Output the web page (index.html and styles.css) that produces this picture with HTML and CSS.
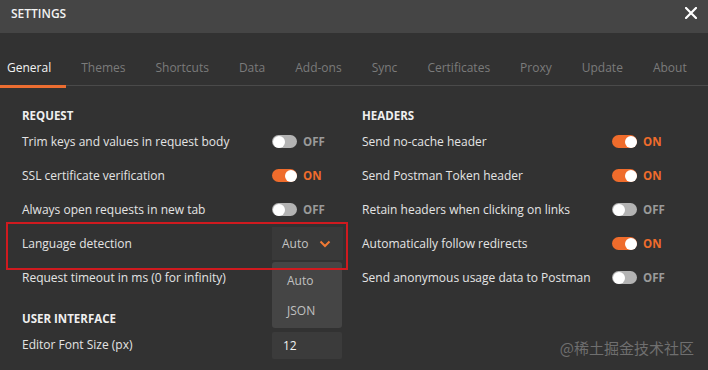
FILE: index.html
```html
<!DOCTYPE html>
<html>
<head>
<meta charset="utf-8">
<link rel="stylesheet" href="styles.css">
</head>
<body>
<div class="titlebar">
  <span class="title">SETTINGS</span>
  <svg class="close" width="12" height="12" viewBox="0 0 12 12"><path d="M1 1 L11 11 M11 1 L1 11" stroke="#fff" stroke-width="2.2" stroke-linecap="square"/></svg>
</div>
<div class="tabs">
  <div class="tab active">General</div>
  <div class="tab">Themes</div>
  <div class="tab">Shortcuts</div>
  <div class="tab">Data</div>
  <div class="tab">Add-ons</div>
  <div class="tab">Sync</div>
  <div class="tab">Certificates</div>
  <div class="tab">Proxy</div>
  <div class="tab">Update</div>
  <div class="tab">About</div>
</div>
<div class="content">
  <div class="col">
    <div class="heading">REQUEST</div>
    <div class="row"><span class="label">Trim keys and values in request body</span><span class="toggle off"><span class="knob"></span></span><span class="state off">OFF</span></div>
    <div class="row"><span class="label">SSL certificate verification</span><span class="toggle on"><span class="knob"></span></span><span class="state on">ON</span></div>
    <div class="row"><span class="label">Always open requests in new tab</span><span class="toggle off"><span class="knob"></span></span><span class="state off">OFF</span></div>
    <div class="row highlight"><span class="label">Language detection</span>
      <div class="select">
        <span class="select-value">Auto</span>
        <svg class="chev" width="12" height="8" viewBox="0 0 12 8"><path d="M1.5 1.5 L6 6 L10.5 1.5" fill="none" stroke="#f07a35" stroke-width="2"/></svg>
        <div class="menu">
          <div class="menu-item">Auto</div>
          <div class="menu-item">JSON</div>
        </div>
      </div>
      <div class="redbox"></div>
    </div>
    <div class="row"><span class="label">Request timeout in ms (0 for infinity)</span></div>
    <div class="heading second">USER INTERFACE</div>
    <div class="row"><span class="label">Editor Font Size (px)</span><div class="input">12</div></div>
  </div>
  <div class="col">
    <div class="heading">HEADERS</div>
    <div class="row"><span class="label">Send no-cache header</span><span class="toggle on"><span class="knob"></span></span><span class="state on">ON</span></div>
    <div class="row"><span class="label">Send Postman Token header</span><span class="toggle on"><span class="knob"></span></span><span class="state on">ON</span></div>
    <div class="row"><span class="label">Retain headers when clicking on links</span><span class="toggle off"><span class="knob"></span></span><span class="state off">OFF</span></div>
    <div class="row"><span class="label">Automatically follow redirects</span><span class="toggle on"><span class="knob"></span></span><span class="state on">ON</span></div>
    <div class="row"><span class="label">Send anonymous usage data to Postman</span><span class="toggle off"><span class="knob"></span></span><span class="state off">OFF</span></div>
  </div>
</div>
<div class="watermark">@稀土掘金技术社区</div>
</body>
</html>
```
FILE: styles.css
```css
html, body {
  margin: 0;
  padding: 0;
}
body {
  width: 708px;
  height: 370px;
  overflow: hidden;
  background: #323232;
  font-family: "Open Sans", "Liberation Sans", sans-serif;
  font-size: 12px;
  color: #e4e4e4;
  position: relative;
}
.titlebar {
  height: 33px;
  background: #454545;
  display: flex;
  align-items: flex-start;
  justify-content: space-between;
  padding: 0 11px;
  box-sizing: border-box;
}
.title {
  line-height: 27px;
  font-weight: 600;
  color: #f2f2f2;
  font-size: 12px;
}
.close {
  margin-top: 7px;
}
.tabs {
  display: flex;
  border-bottom: 1px solid #4a4a4a;
  height: 53px;
  box-sizing: border-box;
}
.tab {
  padding: 20px 15px 0;
  line-height: 29px;
  height: 32px;
  color: #7b7b7b;
  border-bottom: 3px solid transparent;
  white-space: nowrap;
  font-size: 12px;
}
.tab.active {
  color: #f2f2f2;
  border-bottom-color: #ec6d31;
  padding-left: 7px;
}
.content {
  display: flex;
  padding: 21px 0 0 22px;
}
.col {
  width: 340px;
  display: flex;
  flex-direction: column;
}
.heading {
  font-size: 11.5px;
  font-weight: 700;
  line-height: 17px;
  color: #efefef;
}
.heading.second {
  margin-top: 16px;
}
.row {
  height: 34px;
  display: flex;
  align-items: center;
  position: relative;
}
.label {
  width: 250px;
  flex: none;
  white-space: nowrap;
}
.toggle {
  width: 25px;
  height: 13px;
  border-radius: 7px;
  position: relative;
  flex: none;
  margin-top: 1px;
}
.toggle.off { background: #b3b3b3; }
.toggle.on { background: #ef6c2c; }
.knob {
  position: absolute;
  top: 0.5px;
  width: 12px;
  height: 12px;
  border-radius: 50%;
  background: #fff;
}
.toggle.off .knob { left: 0.5px; }
.toggle.on .knob { right: 0.5px; }
.state {
  font-size: 11.5px;
  font-weight: 700;
  margin-left: 6px;
}
.state.off { color: #9a9a9a; }
.state.on { color: #ef6c2c; }
.select {
  width: 71px;
  height: 33px;
  background: #393939;
  display: flex;
  align-items: center;
  box-sizing: border-box;
  padding-left: 10px;
  position: relative;
  margin-top: 1px;
}
.select-value {
  color: #c4c4c4;
  width: 37px;
}
.chev { margin-top: 1px; }
.menu {
  position: absolute;
  left: 0;
  top: 35px;
  width: 70px;
  height: 66px;
  background: #454545;
  border-radius: 3px;
  padding-top: 4px;
  box-sizing: border-box;
  z-index: 2;
}
.menu-item {
  line-height: 30px;
  padding-left: 15px;
  color: #c0c0c0;
}
.redbox {
  position: absolute;
  left: -16px;
  top: -4px;
  width: 342px;
  height: 48px;
  border: 2px solid #d01a1f;
  box-sizing: border-box;
  z-index: 3;
}
.input {
  width: 70px;
  height: 27px;
  background: #3b3b3b;
  border-radius: 2px;
  line-height: 27px;
  padding-left: 11px;
  box-sizing: border-box;
  color: #f2f2f2;
  margin-top: 3px;
}
.watermark {
  position: absolute;
  right: 14px;
  bottom: 12px;
  font-family: "Noto Sans CJK SC", sans-serif;
  font-size: 15px;
  line-height: 20px;
  color: #6f6f6f;
}
```
